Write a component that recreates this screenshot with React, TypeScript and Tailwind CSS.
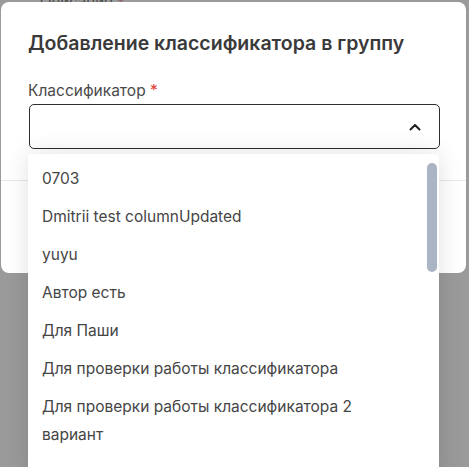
import React from "react";

const items: string[] = [
  "0703",
  "Dmitrii test columnUpdated",
  "yuyu",
  "Автор есть",
  "Для Паши",
  "Для проверки работы классификатора",
  "Для проверки работы классификатора 2 вариант",
];

export default function App() {
  return (
    <div
      className="relative h-[467px] w-[469px] overflow-hidden bg-[#9a9a9a]"
      style={{ fontFamily: "Inter, 'Noto Sans', sans-serif" }}
    >
      <div className="absolute left-[40px] top-[-9px] text-[15px] text-[#4a4a4a]">
        Описание <span className="text-[#8a4a4a]">*</span>
      </div>

      <div className="relative ml-[1px] mt-[2px] flex h-[271px] w-[465px] flex-col rounded-[8px] bg-white">
        <div className="pl-[27px] pr-[28px] pt-[29px]">
          <h2 className="text-[19.5px] font-semibold leading-[24px] text-[#3a3a3a]">
            Добавление классификатора в группу
          </h2>
          <div className="mt-[26px] text-[15.5px] leading-[20px] text-[#4a4a4a]">
            Классификатор <span className="text-[#e53935]">*</span>
          </div>
          <div className="ml-[1px] mt-[3px] flex h-[45px] w-[411px] items-center justify-end rounded-[5px] border border-[#2e2e2e] pr-[18px]">
            <svg width="12" height="8" viewBox="0 0 12 8" fill="none">
              <path d="M1.5 6.5L6 2L10.5 6.5" stroke="#1f1f1f" strokeWidth="2" strokeLinecap="round" strokeLinejoin="round" />
            </svg>
          </div>
        </div>
        <div className="mt-[31px] h-px w-full bg-[#e8e8ec]" />
      </div>

      <div className="absolute left-[28px] top-[154px] h-[330px] w-[411px] rounded-[4px] bg-white shadow-[0_0_24px_rgba(0,0,0,0.12)]">
        <div className="flex flex-col pb-[5px] pl-[14px] pr-[40px] pt-[6px]">
          {items.map((t) => (
            <div key={t} className="py-[5px] text-[15.5px] leading-[28px] text-[#454545]">
              {t}
            </div>
          ))}
        </div>
        <div className="absolute right-[2px] top-[9px] h-[109px] w-[10px] rounded-full bg-[#aab4c4]" />
      </div>
    </div>
  );
}
